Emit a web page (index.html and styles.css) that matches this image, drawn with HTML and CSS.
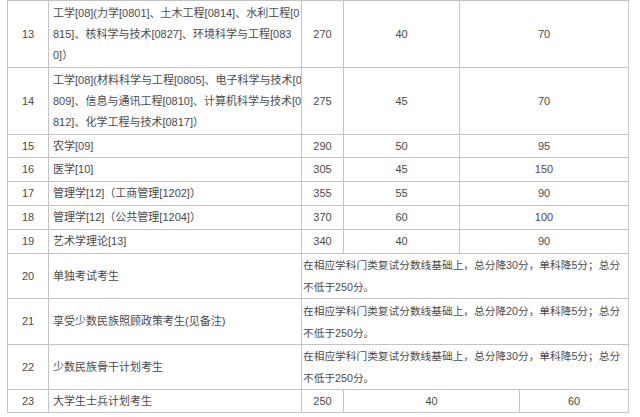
FILE: index.html
```html
<!DOCTYPE html>
<html lang="zh-CN">
<head>
<meta charset="utf-8">
<title>复试分数线</title>
<link rel="stylesheet" href="styles.css">
</head>
<body>
<table class="score-table">
  <colgroup>
    <col class="c-no">
    <col class="c-name">
    <col class="c-total">
    <col class="c-a">
    <col class="c-b">
    <col class="c-c">
  </colgroup>
  <tbody>
    <tr class="r-tall">
      <td class="num">13</td>
      <td class="name">工学[08](力学[0801]、土木工程[0814]、水利工程[0<br>815]、核科学与技术[0827]、环境科学与工程[083<br>0]）</td>
      <td class="num">270</td>
      <td class="num">40</td>
      <td class="num" colspan="2">70</td>
    </tr>
    <tr class="r-tall">
      <td class="num">14</td>
      <td class="name">工学[08](材料科学与工程[0805]、电子科学与技术[0<br>809]、信息与通讯工程[0810]、计算机科学与技术[0<br>812]、化学工程与技术[0817]）</td>
      <td class="num">275</td>
      <td class="num">45</td>
      <td class="num" colspan="2">70</td>
    </tr>
    <tr class="r-first">
      <td class="num">15</td>
      <td class="name">农学[09]</td>
      <td class="num">290</td>
      <td class="num">50</td>
      <td class="num" colspan="2">95</td>
    </tr>
    <tr class="r-single">
      <td class="num">16</td>
      <td class="name">医学[10]</td>
      <td class="num">305</td>
      <td class="num">45</td>
      <td class="num" colspan="2">150</td>
    </tr>
    <tr class="r-single">
      <td class="num">17</td>
      <td class="name">管理学[12]（工商管理[1202]）</td>
      <td class="num">355</td>
      <td class="num">55</td>
      <td class="num" colspan="2">90</td>
    </tr>
    <tr class="r-single">
      <td class="num">18</td>
      <td class="name">管理学[12]（公共管理[1204]）</td>
      <td class="num">370</td>
      <td class="num">60</td>
      <td class="num" colspan="2">100</td>
    </tr>
    <tr class="r-single">
      <td class="num">19</td>
      <td class="name">艺术学理论[13]</td>
      <td class="num">340</td>
      <td class="num">40</td>
      <td class="num" colspan="2">90</td>
    </tr>
    <tr class="r-double">
      <td class="num">20</td>
      <td class="name">单独考试考生</td>
      <td class="note" colspan="4">在相应学科门类复试分数线基础上，总分降30分，单科降5分；总分<br>不低于250分。</td>
    </tr>
    <tr class="r-double2">
      <td class="num">21</td>
      <td class="name">享受少数民族照顾政策考生(见备注)</td>
      <td class="note" colspan="4">在相应学科门类复试分数线基础上，总分降20分，单科降5分；总分<br>不低于250分。</td>
    </tr>
    <tr class="r-double">
      <td class="num">22</td>
      <td class="name">少数民族骨干计划考生</td>
      <td class="note" colspan="4">在相应学科门类复试分数线基础上，总分降30分，单科降5分；总分<br>不低于250分。</td>
    </tr>
    <tr class="r-last">
      <td class="num">23</td>
      <td class="name">大学生士兵计划考生</td>
      <td class="num">250</td>
      <td class="num" colspan="2">40</td>
      <td class="num">60</td>
    </tr>
  </tbody>
</table>
</body>
</html>
```

FILE: styles.css
```css
html, body {
  margin: 0;
  padding: 0;
  background: #ffffff;
}

body {
  padding-left: 7px;
  font-family: "Liberation Sans", "Noto Sans CJK SC", sans-serif;
  font-size: 11px;
  color: #4a4a4a;
}

.score-table {
  border-collapse: collapse;
  table-layout: fixed;
  width: 621px;
  border: 1px solid #c4c4c4;
}

.c-no { width: 41px; }
.c-name { width: 253px; }
.c-total { width: 42px; }
.c-a { width: 116px; }
.c-b { width: 60px; }
.c-c { width: 109px; }

.score-table td {
  border: 1px solid #c4c4c4;
  padding: 0;
  line-height: 21px;
  vertical-align: middle;
  white-space: nowrap;
  overflow: hidden;
}

.score-table td.num {
  text-align: center;
  font-size: 11px;
}

.score-table td.name {
  text-align: left;
  padding-left: 4px;
}

.score-table td.note {
  text-align: left;
  padding-left: 1px;
  line-height: 22px;
  font-size: 10.7px;
}

.r-tall { height: 67px; }
.r-first { height: 23px; }
.r-single { height: 24px; }
.r-double { height: 45px; }
.r-double2 { height: 46px; }
.r-last { height: 23px; }
```
